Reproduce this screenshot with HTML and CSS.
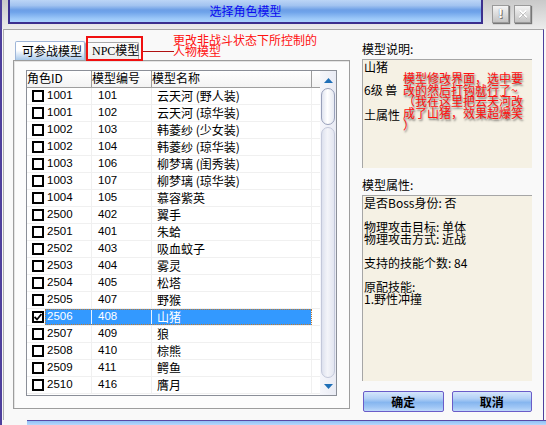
FILE: index.html
```html
<!DOCTYPE html>
<html>
<head>
<meta charset="utf-8">
<link rel="stylesheet" href="styles.css">
</head>
<body>
<div class="window">
  <div class="toprow">
    <div class="titlebar">选择角色模型</div>
    <div class="tbtns">
      <div class="tbtn">!</div>
      <div class="tbtn">
        <svg width="10" height="10" viewBox="0 0 10 10"><path d="M1.5 1.5 L8.5 8.5 M8.5 1.5 L1.5 8.5" stroke="#fff" stroke-width="2"/><path d="M1.5 2.5 L8.5 9.5 M8.5 2.5 L1.5 9.5" stroke="#888" stroke-width="1" opacity="0.5"/></svg>
      </div>
    </div>
  </div>
  <div class="frame">
    <div class="left">
      <div class="tabs">
        <div class="tab active">可参战模型</div>
        <div class="tab npc">NPC模型</div>
      </div>
      <div class="panel">
        <div class="list">
          <div class="table">
            <div class="header">
              <div class="h c1h">角色ID</div>
              <div class="h c2">模型编号</div>
              <div class="h c3">模型名称</div>
              <div class="hfill"></div>
            </div>
            <div class="rows" id="rows"></div>
          </div>
          <div class="scrollbar">
            <div class="arrow up"><svg width="9" height="5" viewBox="0 0 9 5"><path d="M0 5 L4.5 0 L9 5 Z" fill="#1f6fb7"/></svg></div>
            <div class="thumb"></div>
            <div class="track"></div>
            <div class="arrow down"><svg width="9" height="5" viewBox="0 0 9 5"><path d="M0 0 L4.5 5 L9 0 Z" fill="#1f6fb7"/></svg></div>
          </div>
        </div>
      </div>
    </div>
    <div class="right">
      <div class="label">模型说明:</div>
      <div class="descbox">
        <div class="d1">山猪</div>
        <div class="d2">6级 兽</div>
        <div class="d3">土属性</div>
        <div class="note">模型修改界面，选中要
改的然后打钩就行了~
（我在这里把云天河改
成了山猪，效果超爆笑
）</div>
      </div>
      <div class="label label2">模型属性:</div>
      <div class="attrbox">是否Boss身份: 否

物理攻击目标: 单体
物理攻击方式: 近战

支持的技能个数: 84

原配技能:
1.野性冲撞</div>
      <div class="buttons">
        <div class="btn">确定</div>
        <div class="btn">取消</div>
      </div>
    </div>
  </div>
  <div class="bottomband"></div>
  <div class="redbox"></div>
  <div class="redline"></div>
  <div class="rednote">更改非战斗状态下所控制的
人物模型</div>
</div>
<script src="app.js"></script>
</body>
</html>
```

FILE: app.js
```js
var data = [
  ["1001","101","云天河 (野人装)"],
  ["1001","102","云天河 (琼华装)"],
  ["1002","103","韩菱纱 (少女装)"],
  ["1002","104","韩菱纱 (琼华装)"],
  ["1003","106","柳梦璃 (闺秀装)"],
  ["1003","107","柳梦璃 (琼华装)"],
  ["1004","105","慕容紫英"],
  ["2500","402","翼手"],
  ["2501","401","朱蛤"],
  ["2502","403","吸血蚊子"],
  ["2503","404","雾灵"],
  ["2504","405","松塔"],
  ["2505","407","野猴"],
  ["2506","408","山猪"],
  ["2507","409","狼"],
  ["2508","410","棕熊"],
  ["2509","411","鳄鱼"],
  ["2510","416","膺月"]
];
var rows = document.getElementById("rows");
data.forEach(function (d) {
  var sel = d[0] === "2506";
  var r = document.createElement("div");
  r.className = "row" + (sel ? " selected" : "");
  r.innerHTML =
    '<div class="cb"><span class="box">' +
    (sel ? '<svg width="8" height="8" viewBox="0 0 8 8"><path d="M0.5 4 L3 6.5 L7.5 1" fill="none" stroke="#000" stroke-width="1.8"/></svg>' : '') +
    '</span></div>' +
    '<div class="sel"><div class="c c1 num">' + d[0] + '</div><div class="c c2 num">' + d[1] + '</div><div class="c c3">' + d[2] + '</div></div>' +
    '<div class="fill"></div>';
  rows.appendChild(r);
});
```

FILE: styles.css
```css
* { box-sizing: border-box; }
html, body { margin: 0; padding: 0; }
body {
  font-family: "Noto Sans CJK SC", "Liberation Sans", sans-serif;
  font-size: 12px;
  color: #000;
  background: #fff;
}
.window {
  position: relative;
  width: 546px;
  height: 425px;
  background: #f7f7f7;
  border-left: 2px solid #4e3f9c;
  overflow: hidden;
  display: flex;
  flex-direction: column;
}
.toprow {
  height: 29px;
  display: flex;
  background: linear-gradient(#c9c9c9, #ececec);
}
.titlebar {
  margin-left: 6px;
  width: 475px;
  height: 24px;
  border: 2px solid #3b2f8e;
  border-top: none;
  background: linear-gradient(#bcd5f6 0%, #a2c3f0 25%, #6d9fe6 45%, #6fa3ea 55%, #9cc8f8 85%, #a9d3ff 100%);
  color: #0a0af0;
  text-align: center;
  line-height: 22px;
  font-size: 12px;
}
.tbtns {
  display: flex;
  gap: 5px;
  margin-left: 9px;
  margin-top: 5px;
}
.tbtn {
  width: 17px;
  height: 18px;
  background: linear-gradient(#f4f4f4, #c4c4c4);
  border: 1px solid #9a9a9a;
  box-shadow: 1px 1px 1px #777;
  color: #fff;
  font-weight: bold;
  font-family: "DejaVu Sans", sans-serif;
  font-size: 13px;
  line-height: 16px;
  text-align: center;
  text-shadow: 0 0 1px #555, 1px 1px 0 #777;
  display: flex;
  align-items: center;
  justify-content: center;
}
.frame {
  flex: 1;
  margin-left: 1px;
  margin-right: 2px;
  border-top: 1px solid #a8a8a8;
  border-left: 1px solid #b0b0b0;
  border-right: 1px solid #4e3f9c;
  background: #f9f9f9;
  display: flex;
  padding-left: 9px;
  padding-top: 11px;
  gap: 12px;
}
.left { width: 337px; display: flex; flex-direction: column; }
.tabs { display: flex; height: 19px; padding-left: 2px; }
.tab {
  height: 18px;
  line-height: 16px;
  border: 1px solid #a9a9a9;
  border-bottom: none;
  border-radius: 2px 2px 0 0;
  background: linear-gradient(#fdfdfd, #ececec);
  margin-top: 1px;
  white-space: nowrap;
}
.tab.active {
  width: 70px;
  height: 19px;
  padding-left: 6px;
  margin-top: 0;
  line-height: 17px;
  border-color: #9fb6d8;
  background: linear-gradient(#ffffff 0%, #ffffff 45%, #c8dcf2 80%, #a9c9ea 100%);
}
.tab.npc { width: 54px; padding-left: 6px; font-family: "Liberation Serif", "Noto Sans CJK SC", serif; }
.panel {
  width: 337px;
  height: 349px;
  border: 1px solid #9d9d9d;
  box-shadow: inset 1px 1px 0 #e4e4e4;
  background: #fcfcfc;
  padding: 9px 12px 12px 12px;
}
.list {
  width: 311px;
  height: 326px;
  border: 1px solid #8b8f98;
  background: #fff;
  display: flex;
}
.table { width: 293px; display: flex; flex-direction: column; }
.header {
  height: 17px;
  display: flex;
  border-bottom: 1px solid #9e9e9e;
  background: linear-gradient(#ffffff, #f3f3f3);
}
.h { height: 16px; line-height: 14px; border-right: 1px solid #9e9e9e; white-space: nowrap; }
.c1h { width: 65px; }
.h.c2 { width: 60px; padding-left: 0; }
.h.c3 { width: 160px; padding-left: 0; }
.hfill { flex: 1; }
.row { height: 17px; display: flex; border-bottom: 1px solid #f0f0f0; }
.cb { width: 18px; display: flex; align-items: center; padding-left: 5px; }
.box {
  width: 12px; height: 12px;
  border: 2px solid #000;
  background: #fff;
  display: flex; align-items: center; justify-content: center;
}
.sel { display: flex; height: 16px; }
.row.selected .sel {
  background: #3399ff;
  color: #fff;
  outline: 1px dotted #c07a30;
  outline-offset: -1px;
}
.c { height: 16px; line-height: 15px; border-right: 1px solid #f0f0f0; white-space: nowrap; }
.row.selected .c { border-right-color: #e8f2ff; }
.c1 { width: 47px; padding-left: 2px; }
.c2 { width: 60px; padding-left: 6px; }
.c3 { width: 160px; padding-left: 5px; }
.num { font-family: "Liberation Sans", sans-serif; font-size: 11.5px; }
.fill { flex: 1; }
.scrollbar {
  width: 16px;
  display: flex;
  flex-direction: column;
  align-items: center;
  background: linear-gradient(to right, #f5f6fb, #e9ebf4);
}
.arrow { height: 17px; display: flex; align-items: center; justify-content: center; }
.arrow.up { height: 17px; padding-top: 2px; }
.arrow.down { flex: 1; }
.thumb {
  width: 14px; height: 37px;
  border: 1px solid #98a0ba;
  border-radius: 7px;
  background: linear-gradient(to right, #dfe3ef, #ffffff 45%, #e6e9f2);
}
.track {
  margin-top: 2px;
  width: 14px; height: 251px;
  border: 1px solid #c3c8da;
  border-radius: 7px;
  background: linear-gradient(to right, #dde1ee, #f3f4f9 45%, #e3e6f1);
}
.right { width: 170px; display: flex; flex-direction: column; }
.label { height: 18px; line-height: 14px; padding-top: 1px; }
.descbox {
  position: relative;
  height: 109px;
  background: #f5f1e4;
  border-top: 1px solid #a6a6a6;
  border-left: 1px solid #a6a6a6;
}
.d1, .d2, .d3 { height: 14px; line-height: 14px; padding-left: 1px; }
.d2 { margin-top: 9px; }
.d3 { margin-top: 11px; }
.note {
  position: absolute;
  left: 40px;
  top: 12px;
  width: 128px;
  white-space: pre;
  line-height: 11.7px;
  color: #ff1010;
  text-shadow: 1px 2px 2px rgba(0,0,0,0.55);
}
.label2 { margin-top: 9px; }
.attrbox {
  height: 186px;
  background: #f5f1e4;
  border-top: 1px solid #a6a6a6;
  border-left: 1px solid #a6a6a6;
  white-space: pre;
  line-height: 12px;
  padding-top: 1px;
  padding-left: 1px;
}
.buttons { margin-top: 10px; display: flex; gap: 8px; padding-left: 1px; }
.btn {
  width: 81px;
  height: 21px;
  border: 1px solid #6a5cc8;
  border-radius: 2px;
  background: linear-gradient(#d5e6fb 0%, #b2d0f6 35%, #86b6ef 55%, #9fc6f5 80%, #bcd9fa 100%);
  text-align: center;
  line-height: 19px;
  font-weight: bold;
}
.bottomband {
  height: 5px;
  margin-left: 25px;
  border-top: 1px solid #5a4aa5;
  background: linear-gradient(#8ec0f5, #b8d8fb);
}
.redbox {
  position: absolute;
  left: 84px; top: 36px;
  width: 57px; height: 25px;
  border: 2px solid #f01010;
}
.redline {
  position: absolute;
  left: 141px; top: 51px;
  width: 31px; height: 1px;
  background: #b01010;
}
.rednote {
  position: absolute;
  left: 171px; top: 34px;
  white-space: pre;
  line-height: 11px;
  color: #ff1010;
}
```
